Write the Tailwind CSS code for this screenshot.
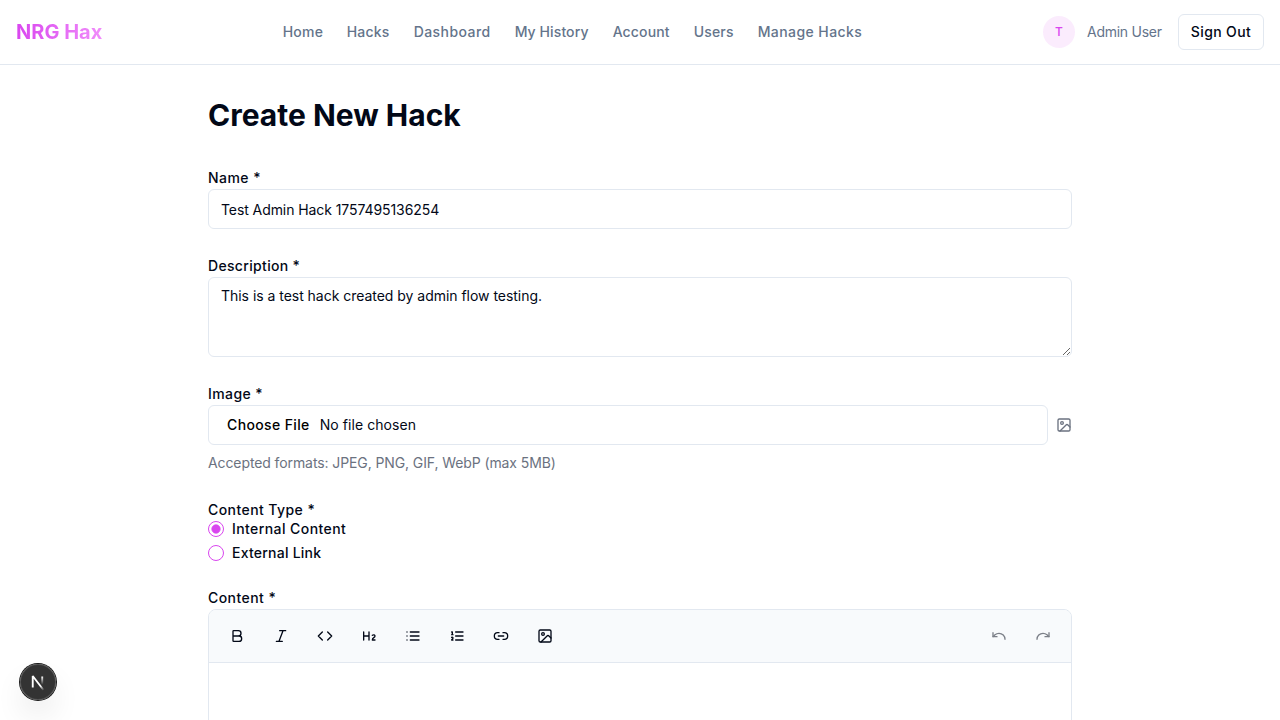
<!DOCTYPE html>
<html lang="en">
<head>
<meta charset="utf-8">
<title>NRG Hax</title>
<script src="https://cdn.jsdelivr.net/npm/@tailwindcss/browser@4"></script>
</head>
<body class="h-screen overflow-hidden bg-white font-['Inter',sans-serif] text-[#020817]">
<header class="border-b border-[#e2e8f0]">
  <div class="flex h-16 items-center justify-between px-4">
    <a class="bg-linear-to-r/srgb from-[#d946ef] to-[#f08cfa] bg-clip-text text-xl font-bold text-transparent">NRG Hax</a>
    <nav class="flex items-center gap-6 text-sm font-medium text-[#64748b]">
      <a class="w-10 tracking-[.25px]">Home</a><a class="w-[43px] tracking-[.2px]">Hacks</a><a class="w-[77px] tracking-[.44px]">Dashboard</a><a class="w-[74px] tracking-[.1px] whitespace-nowrap">My History</a><a class="w-[57px] tracking-[.14px]">Account</a><a class="w-10 tracking-[.2px]">Users</a><a class="w-[105px] tracking-[.42px] whitespace-nowrap">Manage Hacks</a>
    </nav>
    <div class="flex items-center gap-4">
      <div class="flex items-center gap-3">
        <div class="flex size-8 items-center justify-center rounded-full bg-[#d946ef]/10 text-xs font-medium text-[#d946ef]">T</div>
        <span class="w-[75px] text-sm tracking-[-.26px] whitespace-nowrap text-[#64748b]">Admin User</span>
      </div>
      <button class="h-9 w-[86px] rounded-md border border-[#e2e8f0] bg-white text-sm font-medium tracking-[.37px] whitespace-nowrap">Sign Out</button>
    </div>
  </div>
</header>
<main class="mx-auto max-w-4xl px-4 py-8">
  <h1 class="mb-8 text-3xl font-bold">Create New Hack</h1>
  <form class="space-y-6">
    <div>
      <label class="text-sm/none font-medium tracking-[.45px]">Name *</label>
      <input type="text" value="Test Admin Hack 1757495136254" class="flex h-10 w-full rounded-md border border-[#e2e8f0] bg-white px-3 py-2 text-sm tracking-[-.08px]">
    </div>
    <div>
      <label class="text-sm/none font-medium tracking-[.33px]">Description *</label>
      <textarea class="block h-20 w-full rounded-md border border-[#e2e8f0] bg-white px-3 py-2 text-sm tracking-[-.03px]">This is a test hack created by admin flow testing.</textarea>
    </div>
    <div>
      <label class="text-sm/none font-medium tracking-[.42px]">Image *</label>
      <div class="flex items-center gap-2">
        <input type="file" class="flex h-10 w-full rounded-md border border-[#e2e8f0] bg-white px-3 py-2 text-sm tracking-[.07px] file:border-0 file:bg-transparent file:px-1.5 file:py-px file:text-sm file:font-medium file:tracking-[.37px] file:text-black">
        <svg class="size-4 shrink-0 text-[#6b7280]" viewBox="0 0 24 24" fill="none" stroke="currentColor" stroke-width="2" stroke-linecap="round" stroke-linejoin="round"><rect width="18" height="18" x="3" y="3" rx="2"/><circle cx="9" cy="9" r="2"/><path d="m21 15-3.086-3.086a2 2 0 0 0-2.828 0L6 21"/></svg>
      </div>
      <p class="mt-2 text-sm tracking-[-.1px] text-[#6b7280]">Accepted formats: JPEG, PNG, GIF, WebP (max 5MB)</p>
    </div>
    <div>
      <label class="text-sm/none font-medium tracking-[.43px]">Content Type *</label>
      <div class="grid gap-2">
        <div class="flex h-4 items-center gap-2">
          <span class="flex size-4 items-center justify-center rounded-full border border-[#d946ef]"><svg class="size-2.5 fill-[#d946ef] stroke-[#d946ef]" viewBox="0 0 24 24" stroke-width="2"><circle cx="12" cy="12" r="10"/></svg></span>
          <label class="text-sm/none font-medium tracking-[.42px]">Internal Content</label>
        </div>
        <div class="flex h-4 items-center gap-2">
          <span class="size-4 rounded-full border border-[#d946ef]"></span>
          <label class="text-sm/none font-medium tracking-[.23px]">External Link</label>
        </div>
      </div>
    </div>
    <div>
      <label class="text-sm/none font-medium tracking-[.44px]">Content *</label>
      <div class="overflow-hidden rounded-lg border border-[#e2e8f0]">
        <div class="flex items-center gap-1 border-b border-[#e2e8f0] bg-[#f8fafc] p-2">
          <button type="button" class="flex h-9 w-10 items-center justify-center"><svg class="size-4" viewBox="0 0 24 24" fill="none" stroke="currentColor" stroke-width="2" stroke-linecap="round" stroke-linejoin="round"><path d="M6 12h9a4 4 0 0 1 0 8H7a1 1 0 0 1-1-1V5a1 1 0 0 1 1-1h7a4 4 0 0 1 0 8"/></svg></button>
          <button type="button" class="flex h-9 w-10 items-center justify-center"><svg class="size-4" viewBox="0 0 24 24" fill="none" stroke="currentColor" stroke-width="2" stroke-linecap="round" stroke-linejoin="round"><path d="M19 4h-9M14 20H5M15 4 9 20"/></svg></button>
          <button type="button" class="flex h-9 w-10 items-center justify-center"><svg class="size-4" viewBox="0 0 24 24" fill="none" stroke="currentColor" stroke-width="2" stroke-linecap="round" stroke-linejoin="round"><path d="m16 18 6-6-6-6M8 6l-6 6 6 6"/></svg></button>
          <button type="button" class="flex h-9 w-10 items-center justify-center"><svg class="size-4" viewBox="0 0 24 24" fill="none" stroke="currentColor" stroke-width="2" stroke-linecap="round" stroke-linejoin="round"><path d="M4 12h8M4 18V6M12 18V6"/><path d="M21 18h-4c0-4 4-3 4-6 0-1.5-2-2.5-4-1"/></svg></button>
          <button type="button" class="flex h-9 w-10 items-center justify-center"><svg class="size-4" viewBox="0 0 24 24" fill="none" stroke="currentColor" stroke-width="2" stroke-linecap="round" stroke-linejoin="round"><path d="M3 12h.01M3 18h.01M3 6h.01M8 12h13M8 18h13M8 6h13"/></svg></button>
          <button type="button" class="flex h-9 w-10 items-center justify-center"><svg class="size-4" viewBox="0 0 24 24" fill="none" stroke="currentColor" stroke-width="2" stroke-linecap="round" stroke-linejoin="round"><path d="M10 12h11M10 18h11M10 6h11M4 10h2M4 6h1v4M6 18H4c0-1 2-2 2-3s-1-1.5-2-1"/></svg></button>
          <button type="button" class="flex h-9 w-10 items-center justify-center"><svg class="size-4" viewBox="0 0 24 24" fill="none" stroke="currentColor" stroke-width="2" stroke-linecap="round" stroke-linejoin="round"><path d="M9 17H7A5 5 0 0 1 7 7h2M15 7h2a5 5 0 1 1 0 10h-2M8 12h8"/></svg></button>
          <button type="button" class="flex h-9 w-10 items-center justify-center"><svg class="size-4" viewBox="0 0 24 24" fill="none" stroke="currentColor" stroke-width="2" stroke-linecap="round" stroke-linejoin="round"><rect width="18" height="18" x="3" y="3" rx="2"/><circle cx="9" cy="9" r="2"/><path d="m21 15-3.086-3.086a2 2 0 0 0-2.828 0L6 21"/></svg></button>
          <button type="button" class="ml-auto flex h-9 w-10 items-center justify-center opacity-50"><svg class="size-4" viewBox="0 0 24 24" fill="none" stroke="currentColor" stroke-width="2" stroke-linecap="round" stroke-linejoin="round"><path d="M3 7v6h6"/><path d="M21 17a9 9 0 0 0-9-9 9 9 0 0 0-6 2.3L3 13"/></svg></button>
          <button type="button" class="flex h-9 w-10 items-center justify-center opacity-50"><svg class="size-4" viewBox="0 0 24 24" fill="none" stroke="currentColor" stroke-width="2" stroke-linecap="round" stroke-linejoin="round"><path d="M21 7v6h-6"/><path d="M3 17a9 9 0 0 1 9-9 9 9 0 0 1 6 2.3l3 2.7"/></svg></button>
        </div>
        <div class="h-75"></div>
      </div>
    </div>
  </form>
</main>
<div class="fixed bottom-5 left-5 flex size-9 items-center justify-center rounded-full bg-black/80 shadow-[0_0_0_1px_#171717,inset_0_0_0_1px_rgba(255,255,255,0.14),0_16px_32px_-8px_rgba(0,0,0,0.24)]">
  <svg class="size-10 shrink-0" viewBox="0 0 40 40" fill="none">
    <defs>
      <linearGradient id="diag" x1="9.96" y1="11.12" x2="15.48" y2="17.97" gradientUnits="userSpaceOnUse"><stop stop-color="white"/><stop offset=".6" stop-color="white" stop-opacity="0"/><stop offset="1" stop-color="white" stop-opacity="0"/></linearGradient>
      <linearGradient id="stem" x1="11.82" y1="1.4" x2="11.79" y2="9.63" gradientUnits="userSpaceOnUse"><stop stop-color="white"/><stop offset="1" stop-color="white" stop-opacity="0"/></linearGradient>
    </defs>
    <g transform="translate(12.4 13)">
      <path d="M13.3 15.2 2.34 1V12.6" stroke="url(#diag)" stroke-width="1.86" stroke-linejoin="bevel"/>
      <path d="M11.825 1.5V13.1" stroke="url(#stem)" stroke-width="1.86"/>
    </g>
  </svg>
</div>
</body>
</html>
